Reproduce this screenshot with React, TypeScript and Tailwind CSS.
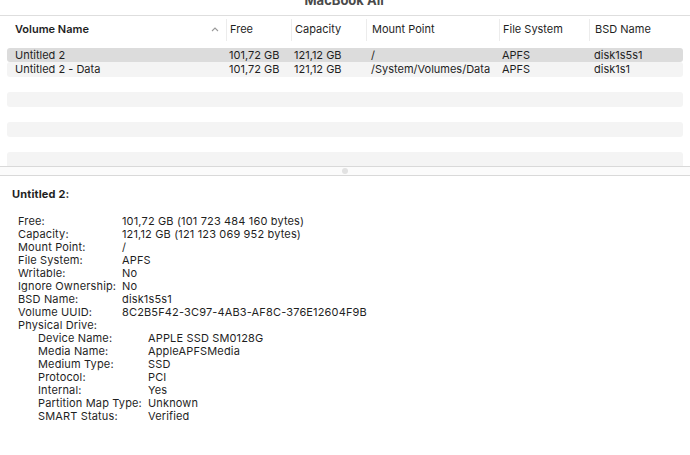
import React from "react";

const cols = [
  { label: "Volume Name", x: 8, w: 219 },
  { label: "Free", x: 227, w: 65 },
  { label: "Capacity", x: 292, w: 75 },
  { label: "Mount Point", x: 367, w: 133 },
  { label: "File System", x: 500, w: 90 },
  { label: "BSD Name", x: 590, w: 96 },
];

const volumes = [
  ["Untitled 2", "101,72 GB", "121,12 GB", "/", "APFS", "disk1s5s1"],
  ["Untitled 2 - Data", "101,72 GB", "121,12 GB", "/System/Volumes/Data", "APFS", "disk1s1"],
];

const info: [string, string][] = [
  ["Free:", "101,72 GB (101 723 484 160 bytes)"],
  ["Capacity:", "121,12 GB (121 123 069 952 bytes)"],
  ["Mount Point:", "/"],
  ["File System:", "APFS"],
  ["Writable:", "No"],
  ["Ignore Ownership:", "No"],
  ["BSD Name:", "disk1s5s1"],
  ["Volume UUID:", "8C2B5F42-3C97-4AB3-AF8C-376E12604F9B"],
];

const drive: [string, string][] = [
  ["Device Name:", "APPLE SSD SM0128G"],
  ["Media Name:", "AppleAPFSMedia"],
  ["Medium Type:", "SSD"],
  ["Protocol:", "PCI"],
  ["Internal:", "Yes"],
  ["Partition Map Type:", "Unknown"],
  ["SMART Status:", "Verified"],
];

const widths = "grid-cols-[219px_65px_75px_133px_90px_96px]";

export default function App() {
  return (
    <div
      className="w-[690px] h-[455px] bg-white overflow-hidden text-[11px] text-[#1f1f1f]"
      style={{ fontFamily: "Inter, 'Liberation Sans', sans-serif" }}
    >
      {/* title strip, mostly scrolled off */}
      <div className="h-[16px] overflow-hidden border-b border-[#dedede] flex justify-center">
        <span className="mt-[-9px] text-[13px] font-bold text-[#4a4a4a]">MacBook Air</span>
      </div>

      {/* header */}
      <div className={`h-[27px] ml-[7px] grid ${widths} items-center`}>
        {cols.map((c, i) => (
          <div
            key={c.label}
            className={`h-[22px] flex items-center ${i === 0 ? "pl-[8px] pr-[8px] font-semibold" : "pl-[3px] border-l border-[#ececec]"} ${i === 3 ? "pl-[5px]" : ""} ${i === 5 ? "pl-[5px]" : ""}`}
          >
            <span className="flex-1">{c.label}</span>
            {i === 0 && (
              <svg width="8" height="5" viewBox="0 0 8 5" className="mr-[-1px]">
                <path d="M1 4 L4 1 L7 4" fill="none" stroke="#9a9a9a" strokeWidth="1.1" />
              </svg>
            )}
          </div>
        ))}
      </div>

      {/* rows */}
      <div className="mt-[5px] px-[7px] flex flex-col">
        {volumes.map((v, r) => (
          <div
            key={v[0]}
            className={`grid ${widths} items-center rounded-[3px] ${r === 0 ? "bg-[#dcdcdc] h-[14px]" : "bg-[#f4f4f4] h-[15px]"}`}
          >
            {v.map((cell, i) => (
              <div
                key={i}
                className={`truncate ${i === 0 ? "pl-[8px]" : i === 3 || i === 5 ? "pl-[5px]" : "pl-[3px]"}`}
              >
                {cell}
              </div>
            ))}
          </div>
        ))}
        {[0, 1, 2, 3, 4, 5].map((i) => (
          <div
            key={i}
            className={`${i === 5 ? "h-[14px] rounded-t-[3px]" : "h-[15px] rounded-[3px]"} ${i % 2 === 1 ? "bg-[#f4f4f4]" : "bg-white"}`}
          />
        ))}
      </div>

      {/* splitter */}
      <div className="h-[10px] border-y border-[#d9d9d9] bg-[#fbfbfb] flex items-center justify-center">
        <div className="w-[6px] h-[6px] rounded-full bg-[#e2e2e2]" />
      </div>

      {/* details */}
      <div className="pl-[12px] pt-[12px] tracking-[0.15px]">
        <div className="font-bold leading-[13px]">Untitled 2:</div>
        <div className="mt-[14px] pl-[6px] leading-[13px]">
          {info.map(([k, v]) => (
            <div key={k} className="flex">
              <span className="w-[104px] shrink-0">{k}</span>
              <span>{v}</span>
            </div>
          ))}
          <div>Physical Drive:</div>
          <div className="pl-[20px]">
            {drive.map(([k, v]) => (
              <div key={k} className="flex">
                <span className="w-[110px] shrink-0">{k}</span>
                <span>{v}</span>
              </div>
            ))}
          </div>
        </div>
      </div>
    </div>
  );
}
